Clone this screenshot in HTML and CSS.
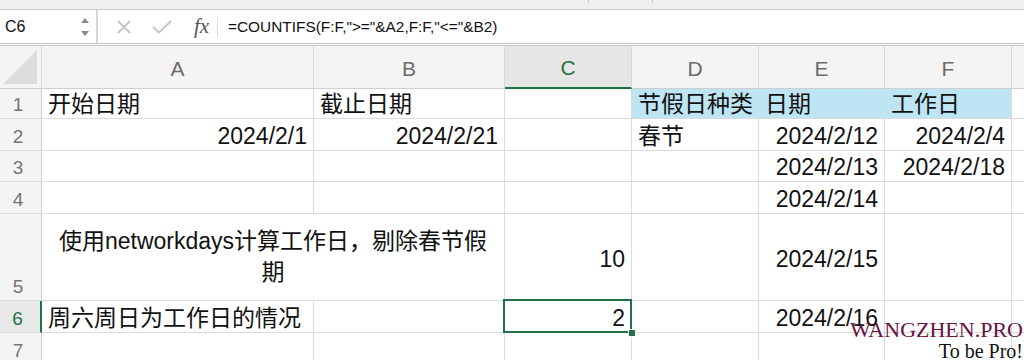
FILE: index.html
```html
<!DOCTYPE html>
<html lang="zh-CN">
<head>
  <meta charset="UTF-8" />
  <title>Excel - 工作日</title>
  <link rel="stylesheet" href="styles.css">
</head>
<body>

  <div class="toolbar">
    <span class="tsep"></span>
    <span class="tsep"></span>
  </div>

  <div class="formula-bar">
    <div class="namebox">
      <span>C6</span>
      <svg class="stepper" width="10" height="20" viewBox="0 0 10 20">
        <path d="M1 6 L5 1 L9 6 Z" fill="#8a8a8a"/>
        <path d="M1 14 L5 19 L9 14 Z" fill="#8a8a8a"/>
      </svg>
    </div>
    <div class="fbtns">
      <svg width="16" height="14" viewBox="0 0 16 14">
        <path d="M2 1 L14 13 M14 1 L2 13" stroke="#c6c6c6" stroke-width="2" fill="none"/>
      </svg>
      <svg width="20" height="14" viewBox="0 0 20 14">
        <path d="M1 7 L7 12.5 L19 1" stroke="#c6c6c6" stroke-width="2" fill="none"/>
      </svg>
      <span class="fx">fx</span>
    </div>
    <div class="fsep"></div>
    <div class="ftext">=COUNTIFS(F:F,"&gt;="&amp;A2,F:F,"&lt;="&amp;B2)</div>
  </div>

  <div class="sheet">
    <!-- column headers -->
    <div class="hd corner">
      <svg width="34" height="34" viewBox="0 0 34 34"><path d="M0 34 L34 34 L34 0 Z" fill="#dcdcdc"/></svg>
    </div>
    <div class="hd">A</div>
    <div class="hd">B</div>
    <div class="hd active">C</div>
    <div class="hd">D</div>
    <div class="hd">E</div>
    <div class="hd">F</div>
    <div class="hd"></div>

    <!-- row 1 -->
    <div class="rh">1</div>
    <div class="c">开始日期</div>
    <div class="c">截止日期</div>
    <div class="c"></div>
    <div class="c fill">节假日种类</div>
    <div class="c fill">日期</div>
    <div class="c fill last">工作日</div>
    <div class="c"></div>

    <!-- row 2 -->
    <div class="rh">2</div>
    <div class="c num">2024/2/1</div>
    <div class="c num">2024/2/21</div>
    <div class="c"></div>
    <div class="c">春节</div>
    <div class="c num">2024/2/12</div>
    <div class="c num">2024/2/4</div>
    <div class="c"></div>

    <!-- row 3 -->
    <div class="rh">3</div>
    <div class="c"></div>
    <div class="c"></div>
    <div class="c"></div>
    <div class="c"></div>
    <div class="c num">2024/2/13</div>
    <div class="c num">2024/2/18</div>
    <div class="c"></div>

    <!-- row 4 -->
    <div class="rh">4</div>
    <div class="c"></div>
    <div class="c"></div>
    <div class="c"></div>
    <div class="c"></div>
    <div class="c num">2024/2/14</div>
    <div class="c"></div>
    <div class="c"></div>

    <!-- row 5 (A5:B5 merged) -->
    <div class="rh">5</div>
    <div class="c merged">使用networkdays计算工作日，剔除春节假<br>期</div>
    <div class="c num mid">10</div>
    <div class="c"></div>
    <div class="c num mid">2024/2/15</div>
    <div class="c"></div>
    <div class="c"></div>

    <!-- row 6 -->
    <div class="rh active">6</div>
    <div class="c">周六周日为工作日的情况</div>
    <div class="c"></div>
    <div class="c num selected">2</div>
    <div class="c"></div>
    <div class="c num">2024/2/16</div>
    <div class="c"></div>
    <div class="c"></div>

    <!-- row 7 -->
    <div class="rh">7</div>
    <div class="c"></div>
    <div class="c"></div>
    <div class="c"></div>
    <div class="c"></div>
    <div class="c"></div>
    <div class="c"></div>
    <div class="c"></div>
  </div>

  <div class="watermark">
    <div class="wm-site">WANGZHEN.PRO</div>
    <div class="wm-tag">To be Pro!</div>
  </div>

</body>
</html>
```

FILE: styles.css
```css
body {
  margin: 0;
  width: 1024px;
  height: 360px;
  overflow: hidden;
  position: relative;
  background: #fff;
  font-family: "Liberation Sans", "Noto Sans CJK SC", sans-serif;
  color: #111;
}
.toolbar {
  height: 9px;
  background: #efefef;
  border-bottom: 1px solid #cdcdcd;
  display: flex;
  padding-left: 588px;
  gap: 63px;
}
.tsep {
  width: 1px;
  height: 3px;
  background: #c9c9c9;
}
.formula-bar {
  height: 33px;
  display: flex;
  align-items: center;
  background: #fff;
  border-bottom: 3px double #c6c6c6;
}
.namebox {
  width: 98px;
  height: 100%;
  box-sizing: border-box;
  border-right: 2px solid #d6d6d6;
  display: flex;
  align-items: center;
  justify-content: space-between;
  padding: 0 6px 0 5px;
  font-size: 16px;
  color: #111;
}
.fbtns {
  display: flex;
  align-items: center;
  gap: 20px;
  padding-left: 18px;
  width: 101px;
}
.fx {
  font-family: "Liberation Serif", serif;
  font-style: italic;
  font-size: 21px;
  color: #555;
  margin-left: 2px;
}
.fsep {
  width: 1px;
  height: 20px;
  background: #dcdcdc;
  margin-right: 10px;
}
.ftext {
  font-size: 15.4px;
  color: #111;
}
.sheet {
  display: grid;
  grid-template-columns: 42px 272px 191px 127px 127px 126px 127px 1fr;
  grid-template-rows: 43px 30px 32px 31px 32px 87px 32px 32px;
  height: 314px;
  overflow: hidden;
}
.hd {
  background: #f4f4f4;
  border-right: 1px solid #d9d9d9;
  border-bottom: 1px solid #cfcfcf;
  display: flex;
  align-items: center;
  justify-content: center;
  padding-top: 3px;
  font-size: 21px;
  color: #6c6c6c;
  box-sizing: border-box;
}
.hd.corner {
  padding: 0 4px 4px 0;
  align-items: flex-end;
  justify-content: flex-end;
}
.hd.active {
  background: #e6e6e6;
  color: #217346;
  border-bottom: 2px solid #217346;
}
.rh {
  background: #f4f4f4;
  border-right: 1px solid #cfcfcf;
  border-bottom: 1px solid #dcdcdc;
  display: flex;
  align-items: flex-end;
  justify-content: center;
  padding-right: 5px;
  font-size: 19px;
  line-height: 27px;
  color: #747474;
  box-sizing: border-box;
}
.rh.active {
  background: #e8e8e8;
  color: #217346;
  border-right: 2px solid #217346;
}
.c {
  border-right: 1px solid #dadada;
  border-bottom: 1px solid #dadada;
  display: flex;
  align-items: flex-end;
  padding: 0 6px;
  font-size: 23px;
  line-height: 27px;
  white-space: nowrap;
  box-sizing: border-box;
  position: relative;
}
.c.num {
  justify-content: flex-end;
}
.c.mid {
  align-items: center;
  padding-top: 5px;
}
.c.fill {
  background: #bee5f3;
  border-right-color: #bee5f3;
}
.c.fill.last {
  border-right-color: #dadada;
}
.c.merged {
  grid-column: span 2;
  align-items: center;
  justify-content: center;
  text-align: center;
  line-height: 31px;
}
.c.selected::after {
  content: "";
  position: absolute;
  left: -2px;
  top: -2px;
  right: -1px;
  bottom: -1px;
  border: 2px solid #217346;
}
.c.selected::before {
  content: "";
  position: absolute;
  right: -5px;
  bottom: -5px;
  width: 6px;
  height: 6px;
  background: #217346;
  border: 1px solid #fff;
  z-index: 2;
}
.watermark {
  position: absolute;
  right: 1px;
  top: 319px;
  text-align: right;
  font-family: "Liberation Serif", serif;
  line-height: 20px;
}
.wm-site {
  color: #6b1042;
  font-size: 22px;
  line-height: 22px;
}
.wm-tag {
  color: #111;
  font-size: 20px;
}
```
